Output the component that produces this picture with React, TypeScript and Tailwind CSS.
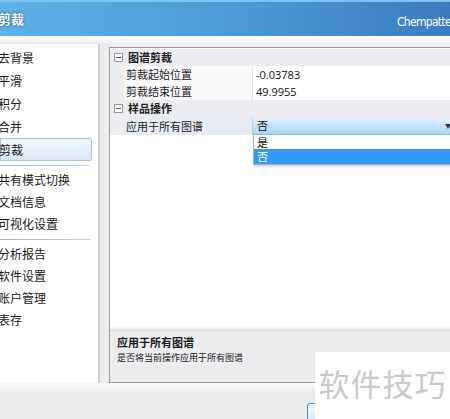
import React from "react";

const cjk = '"Noto Sans CJK SC", "Noto Sans", sans-serif';

const navTop = [
  { label: "去背景" },
  { label: "平滑" },
  { label: "积分" },
  { label: "合并" },
  { label: "剪裁", selected: true },
];
const navMid = ["共有模式切换", "文档信息", "可视化设置"];
const navBottom = ["分析报告", "软件设置", "账户管理", "表存"];

function Separator() {
  return (
    <div className="h-[8px] flex items-center">
      <div className="h-px w-[90px] bg-gradient-to-r from-[#9bb3cc] to-[#c9d6e3]" />
    </div>
  );
}

function Expander() {
  return (
    <div className="w-[9px] h-[9px] border border-[#9a9a9a] bg-white flex items-center justify-center">
      <div className="w-[5px] h-px bg-[#555]" />
    </div>
  );
}

function CategoryRow({ title }: { title: string }) {
  return (
    <div className="h-[17px] flex items-center bg-[#ededf1]">
      <div className="w-[13px] flex justify-end">
        <Expander />
      </div>
      <span className="pl-[5px] text-[11px] leading-none font-bold text-[#222]">{title}</span>
    </div>
  );
}

function PropRow({ label, value }: { label: string; value: string }) {
  return (
    <div className="h-[17px] flex">
      <div className="w-[14px] bg-[#ededf1]" />
      <div className="w-[129px] flex items-center pl-[2px] text-[11px] leading-none text-[#222] bg-[#fafafc] border-r border-[#e2e2e6]">
        {label}
      </div>
      <div
        className="flex-1 flex items-center pl-[3px] text-[11px] leading-none text-[#111] bg-white"
        style={{ fontFamily: '"Open Sans", sans-serif' }}
      >
        {value}
      </div>
    </div>
  );
}

export default function App() {
  return (
    <div
      className="relative w-[450px] h-[419px] overflow-hidden bg-[#ececef] flex flex-col"
      style={{ fontFamily: cjk }}
    >
      {/* title bar */}
      <div className="h-[36px] shrink-0 flex items-center bg-gradient-to-r from-[#5db2e8] via-[#4d9bd6] to-[#3a7cbf] border-t-2 border-[#7cc4ef]">
        <span
          className="ml-[-2px] text-[13px] font-bold text-white"
          style={{ textShadow: "0 0 3px rgba(20,60,110,0.8)" }}
        >
          剪裁
        </span>
        <div className="ml-auto w-[53px] overflow-hidden whitespace-nowrap">
          <span
            className="text-[12px] text-white tracking-[-0.7px]"
            style={{ fontFamily: '"DejaVu Sans Condensed", "Liberation Sans", sans-serif' }}
          >
            Chempattern
          </span>
        </div>
      </div>
      <div className="h-[8px] shrink-0 bg-gradient-to-b from-white to-[#ececef]" />

      <div className="flex h-[339px] shrink-0">
        {/* left navigation */}
        <div className="w-[100px] shrink-0 bg-white border-r-2 border-[#d0d0d4] pt-[2px] text-[12px] text-[#1a1a1a] overflow-hidden">
          {navTop.map((it) => (
            <div
              key={it.label}
              className={
                it.selected
                  ? "h-[23px] w-[92px] flex items-center border border-[#a9c3e0] rounded-r-[2px] bg-gradient-to-b from-[#f2f7fd] to-[#dbe8f6]"
                  : "h-[23px] flex items-center"
              }
            >
              <span className="ml-[-2px] whitespace-nowrap">{it.label}</span>
            </div>
          ))}
          <Separator />
          {navMid.map((l) => (
            <div key={l} className="h-[22px] flex items-center">
              <span className="ml-[-2px] whitespace-nowrap">{l}</span>
            </div>
          ))}
          <Separator />
          {navBottom.map((l) => (
            <div key={l} className="h-[22px] flex items-center">
              <span className="ml-[-2px] whitespace-nowrap">{l}</span>
            </div>
          ))}
        </div>

        {/* property grid */}
        <div className="ml-[9px] mt-[3px] flex-1 flex flex-col border-l border-t border-b border-[#9c9ca0] bg-white">
          <div className="relative flex-1 flex flex-col pt-px bg-white">
            <CategoryRow title="图谱剪裁" />
            <PropRow label="剪裁起始位置" value="-0.03783" />
            <PropRow label="剪裁结束位置" value="49.9955" />
            <CategoryRow title="样品操作" />
            <div className="h-[18px] flex">
              <div className="w-[14px] bg-[#ededf1]" />
              <div className="w-[129px] flex items-center pl-[2px] text-[11px] leading-none text-[#222] bg-[#e7ecf4] border-r border-[#c6cfdc]">
                应用于所有图谱
              </div>
              <div className="flex-1 flex items-center justify-between pl-[4px] text-[11px] leading-none text-[#111] bg-gradient-to-b from-[#eaf5fd] via-[#c6e4f8] to-[#a9d5f3] border-b border-[#8db8dc]">
                <span>否</span>
                <span className="mr-[-1px] text-[6px] text-[#333]">▼</span>
              </div>
            </div>
            {/* open drop-down list */}
            <div className="absolute left-[143px] top-[87px] right-0 h-[30px] flex flex-col bg-white border-l border-b border-[#9db0c6] shadow-[1px_2px_2px_rgba(0,0,0,0.15)]">
              <div className="h-[14px] flex items-center pl-[3px] text-[11px] leading-none text-[#111]">是</div>
              <div className="h-[15px] flex items-center pl-[3px] text-[11px] leading-none text-white bg-[#3399f3]">否</div>
            </div>
            <div className="flex-1" />
            <div className="h-[4px] bg-gradient-to-b from-white to-[#e4e4e8]" />
          </div>
          <div className="h-[52px] shrink-0 bg-[#ececef] border-t border-[#d8d8dc] px-[7px] pt-[3px]">
            <div className="text-[11px] font-bold text-[#1a1a1a] leading-[17px]">应用于所有图谱</div>
            <div className="text-[9px] text-[#222] leading-[14px]">是否将当前操作应用于所有图谱</div>
          </div>
        </div>
      </div>

      {/* footer */}
      <div className="relative flex-1 bg-[#ebebee]">
        <div className="h-[10px] bg-gradient-to-b from-[#f8f8fa] to-[#ebebee]" />
        <div className="absolute left-[307px] top-[20px] w-[30px] h-[24px] rounded-[3px] border border-[#4a8fd0] bg-gradient-to-b from-[#f3f9ff] to-[#cfe5f8]" />
      </div>

      {/* watermark */}
      <div className="absolute left-[315px] top-[352px] w-[135px] h-[67px] bg-white flex items-center justify-center">
        <span className="mt-[-4px] text-[31px] text-[#c9c9c9] tracking-[1px]">软件技巧</span>
      </div>
    </div>
  );
}
